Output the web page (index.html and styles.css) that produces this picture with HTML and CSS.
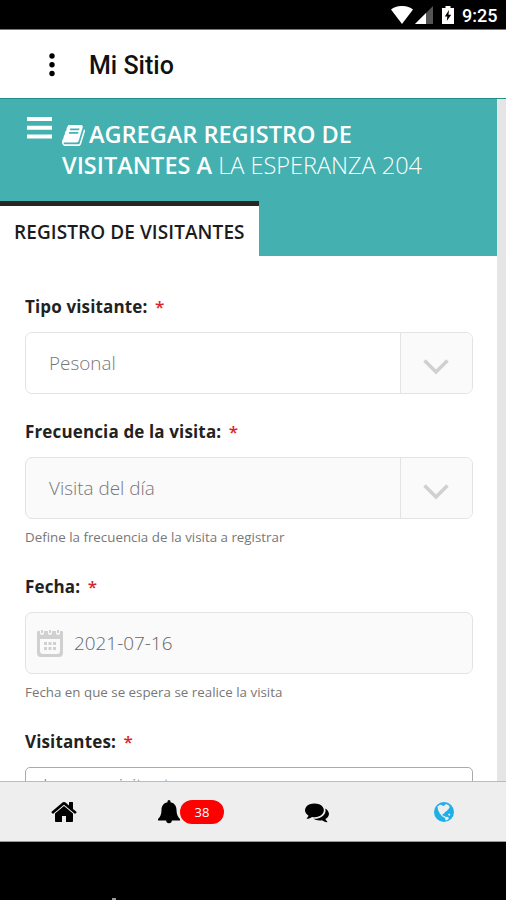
FILE: index.html
```html
<!DOCTYPE html>
<html lang="es">
<head>
<meta charset="utf-8">
<title>Mi Sitio</title>
<link rel="stylesheet" href="styles.css">
</head>
<body>
<div class="status">
  <svg class="wifi" width="22" height="18" viewBox="0 0 22 18"><path fill="#fff" d="M0 3.500C6-1.200 16-1.200 22 3.500L11 18z"/></svg>
  <svg class="signal" width="18" height="18" viewBox="0 0 18 18"><path fill="#555" d="M0 18L18 0v18z"/><path fill="#fff" d="M0 18L11 7v11z"/></svg>
  <svg class="battery" width="12" height="18" viewBox="0 0 12 18"><path fill="#fff" d="M3.500 0h5v2H12v16H0V2h3.500z"/><path fill="#000" d="M7 4L2.800 10.500h2.500L4.800 15l4.400-6.300H6.500z"/></svg>
  <span class="clock">9:25</span>
</div>
<header class="appbar">
  <svg class="dots" width="6" height="24" viewBox="0 0 6 24"><circle cx="3" cy="3" r="2.700"/><circle cx="3" cy="11.800" r="2.700"/><circle cx="3" cy="20.500" r="2.700"/></svg>
  <span class="site">Mi Sitio</span>
</header>
<main class="view">
  <div class="page">
    <section class="hero">
      <div class="heading">
        <svg class="burger" width="25" height="22" viewBox="0 0 25 22"><path fill="#fff" d="M0 0h25v4H0zM0 8.700h25v4H0zM0 17.500h25v4H0z"/></svg>
        <h1><svg class="book" width="23" height="25" viewBox="0 0 1664 1792"><path fill="#fff" d="M1639 478q40 57 18 129l-275 906q-19 64-76.500 107.500t-122.500 43.500h-923q-77 0-148.500-53.500t-99.500-131.500q-24-67-2-127 0-4 3-27t4-37q1-8-3-21.500t-3-19.500q2-11 8-21t16.500-23.500 16.500-23.500q23-38 45-91.500t30-91.500q3-10 .5-30t-.5-28q3-11 17-28t17-23q21-36 42-92t25-90q1-9-2.500-32t.5-28q4-13 22-30.500t22-22.500q19-26 42.500-84.500t27.500-96.500q1-8-3-25.500t-2-26.500q2-8 9-18t18-23 17-21q8-12 16.500-30.500t15-35 16-36 19.500-32 26.500-23.500 36-11.500 47.500 5.500l-1 3q38-9 51-9h761q74 0 114 56t18 130l-274 906q-36 119-71.500 153.500t-128.500 34.500h-869q-27 0-38 15-11 16-1 43 24 70 144 70h923q29 0 56-15.500t35-41.500l300-987q7-22 5-57 38 15 59 43zm-1064 2q-4 13 2 22.500t20 9.500h608q13 0 25.500-9.500t16.500-22.500l21-64q4-13-2-22.500t-20-9.500h-608q-13 0-25.500 9.500t-16.500 22.500zm-83 256q-4 13 2 22.500t20 9.500h608q13 0 25.500-9.500t16.500-22.500l21-64q4-13-2-22.500t-20-9.500h-608q-13 0-25.500 9.500t-16.500 22.500z"/></svg>AGREGAR REGISTRO DE<br>VISITANTES A <span class="place">LA ESPERANZA 204</span></h1>
      </div>
      <div class="tab">REGISTRO DE VISITANTES</div>
    </section>
    <form class="form">
      <div class="field first">
        <label>Tipo visitante: <b>*</b></label>
        <div class="control white"><span class="value">Pesonal</span><span class="arrow"><svg width="26" height="16" viewBox="0 0 26 16"><path d="M1.500 1.500L13 13L24.500 1.500"/></svg></span></div>
      </div>
      <div class="field">
        <label>Frecuencia de la visita: <b>*</b></label>
        <div class="control"><span class="value">Visita del día</span><span class="arrow"><svg width="26" height="16" viewBox="0 0 26 16"><path d="M1.500 1.500L13 13L24.500 1.500"/></svg></span></div>
        <p class="help">Define la frecuencia de la visita a registrar</p>
      </div>
      <div class="field">
        <label>Fecha: <b>*</b></label>
        <div class="control"><svg class="cal" width="26" height="27" viewBox="0 0 26 27"><path fill="#d0d0d0" fill-rule="evenodd" d="M0 2Q0 1 1 1H3v2a2 2 0 0 0 4 0V1h4v2a2 2 0 0 0 4 0V1h4v2a2 2 0 0 0 4 0V1h2q1 0 1 1v21q0 4-4 4H4q-4 0-4-4zM3 9v12q0 3 3 3h14q3 0 3-3V9z"/><path fill="#d0d0d0" d="M4 0h2v3H4zM12 0h2v3h-2zM20 0h2v3h-2zM7 12h3v3H7zM11.500 12h3v3h-3zM16 12h3v3h-3zM7 17h3v3H7zM11.500 17h3v3h-3zM16 17h3v3h-3z"/></svg><span class="date">2021-07-16</span></div>
        <p class="help">Fecha en que se espera se realice la visita</p>
      </div>
      <div class="field">
        <label>Visitantes: <b>*</b></label>
        <div class="control white entry"><span>Ingresa visitante</span></div>
      </div>
    </form>
  </div>
</main>
<nav class="nav">
  <svg class="home" width="26" height="28" viewBox="0 0 1664 1792"><path d="M1408 992v480q0 26-19 45t-45 19H960v-384H704v384H320q-26 0-45-19t-19-45V992l1-6 575-474 575 474q1 2 1 6zm223-69l-62 74q-8 9-21 11h-3q-13 0-21-7L832 424l-692 577q-12 8-24 7-13-2-21-11l-62-74q-8-10-7-23.500T37 878l719-599q32-26 76-26t76 26l244 204V288q0-14 9-23t23-9h192q14 0 23 9t9 23v408l219 182q10 8 11 21.500t-7 23.500z"/></svg>
  <svg class="bell" width="22" height="24" viewBox="0 0 22 24"><path d="M9.500 2.300V1.500a1.500 1.500 0 0 1 3 0v.8c4.500.8 6 4.300 6 7.700 0 4.500 1.500 7 3.500 9v1.500h-8.200a2.800 2.800 0 0 1-5.600 0H0V19c2-2 3.500-4.500 3.500-9 0-3.400 1.500-6.900 6-7.700z"/></svg>
  <span class="count">38</span>
  <svg class="chat" width="24" height="24" viewBox="0 0 1792 1792"><path d="M1408 768q0 139-94 257t-256.500 186.500-353.500 68.500q-86 0-176-16-124 88-278 128-36 9-86 16h-3q-11 0-20.500-8t-11.500-21q-1-3-1-6.500t.5-6.500 2-6l2.500-5 3.500-5.500 4-5 4.500-5 4-4.500q5-6 23-25t26-29.500 22.500-29 25-38.500 20.500-44q-124-72-195-177t-71-224q0-139 94-257t256.500-186.500 353.500-68.500 353.500 68.500 256.500 186.500 94 257zm384 256q0 120-71 224.500t-195 176.500q10 24 20.500 44t25 38.500 22.500 29 26 29.500 23 25q1 1 4 4.500t4.500 5 4 5 3.500 5.500l2.500 5 2 6 .5 6.500-1 6.500q-3 14-13 22t-22 7q-50-7-86-16-154-40-278-128-90 16-176 16-271 0-472-132 58 4 88 4 161 0 309-45t264-129q125-92 192-212t67-243q0-70-21-139 125 69 199 173t74 222z"/></svg>
  <svg class="globe" width="20" height="20" viewBox="0 0 20 20"><circle cx="10" cy="10" r="10" fill="#1eaee9"/><path fill="#eee" d="M3.500 4.500L6 2.800l2 .2 1 1.300L11 3l1-1 2.700 1.200 1 2.300-1.600 1.900-1.200 1.300-2 1.500-1 1.500-1.500.3.300 1.500 2.300.8.700 1.600-1.700-.4-2.200-1.400-2-2.500L4 8z"/><path fill="#eee" d="M11.500 14.800l2.500.2 1 1.300-1.500 1.700-1.800.5-.7-1.800zM14 12.300l1.800-.8.500 1.700-1.300.5z"/></svg>
</nav>
<div class="system"><span class="mark"></span></div>
</body>
</html>
```
FILE: styles.css
```css
* { box-sizing: border-box; }
body {
  margin: 0;
  width: 506px;
  height: 900px;
  overflow: hidden;
  display: flex;
  flex-direction: column;
  background: #000;
  font-family: "Open Sans", sans-serif;
}
svg { display: block; flex: none; }

.status {
  height: 30px;
  display: flex;
  align-items: flex-start;
  padding: 6px 0 0 391px;
  border-bottom: 1px solid #777;
}
.signal { margin-left: 2px; }
.battery { margin-left: 9px; }
.clock {
  margin-left: 8px;
  color: #fff;
  font: 500 18px/20px Roboto, sans-serif;
}

.appbar {
  height: 69px;
  display: flex;
  align-items: center;
  padding: 4px 0 0 49px;
  background: #fff;
  border-bottom: 1px solid #218f8e;
}
.dots { margin-top: -3px; }
.site {
  margin-left: 34px;
  font: 500 25px/30px Roboto, sans-serif;
  color: #111;
}

.view { height: 682px; overflow: hidden; background: #e5e5e5; }
.page { width: 497px; height: 682px; background: #fff; }
.hero {
  height: 157px;
  display: flex;
  flex-direction: column;
  justify-content: space-between;
  align-items: flex-start;
  background: #44b0b0;
}
.heading { display: flex; padding: 18px 0 0 27px; }
h1 {
  margin: 2px 0 0 10px;
  color: #fff;
  font-size: 23.500px;
  line-height: 31px;
  font-weight: 600;
  white-space: nowrap;
}
.book { display: inline-block; vertical-align: -5px; margin-right: 4px; }
.place { font-weight: 300; }
.tab {
  width: 259px;
  height: 55px;
  padding-left: 14px;
  border-top: 5px solid #262626;
  background: #fff;
  color: #1c1c1c;
  font-size: 19px;
  letter-spacing: .08px;
  font-weight: 600;
  line-height: 52px;
  white-space: nowrap;
}

.form { padding: 38px 24px 0 25px; }
.field { height: 155px; }
.first { height: 125px; }
label {
  display: block;
  height: 26px;
  margin-bottom: 12px;
  color: #222;
  font-size: 17px;
  letter-spacing: .14px;
  font-weight: 700;
  line-height: 26px;
  white-space: nowrap;
}
label b { margin-left: 3px; color: #d9232e; font-weight: 600; }
.control {
  height: 62px;
  display: flex;
  align-items: center;
  border: 1px solid #e3e3e3;
  border-radius: 7px;
  background: #fafafa;
  color: #777;
  font-size: 18.900px;
  font-weight: 300;
  overflow: hidden;
}
.white { background: #fff; }
.value { flex: 1; padding-left: 23px; }
.arrow {
  width: 72px;
  height: 100%;
  display: flex;
  justify-content: center;
  align-items: center;
  padding-top: 7px;
  padding-right: 1px;
  border-left: 1px solid #e3e3e3;
  background: #fafafa;
}
.arrow path { fill: none; stroke: #d0d0d0; stroke-width: 3.500; }
.cal { margin-left: 11px; }
.date { margin-left: 11px; color: #666; }
.help {
  height: 18px;
  margin: 9px 0 0;
  color: #777;
  font-size: 13.350px;
  line-height: 18px;
  white-space: nowrap;
}
.entry { border-color: #aaa; align-items: flex-start; padding: 4px 0 0 17px; border-radius: 5px; }

.nav {
  height: 61px;
  display: flex;
  align-items: center;
  background: #eee;
  border-top: 1px solid #bbb;
  border-bottom: 1px solid #999;
}
.home { margin-left: 51px; }
.bell { margin-left: 81px; }
.count {
  width: 44px;
  height: 24px;
  border-radius: 12px;
  background: #f00;
  color: #fff;
  font: 13px/25px "Open Sans", sans-serif;
  text-align: center;
}
.chat { margin-left: 81px; }
.globe { margin-left: 105px; }

.system { flex: 1; display: flex; align-items: flex-end; padding-left: 112px; }
.mark { width: 4px; height: 2px; background: #999; }
```
